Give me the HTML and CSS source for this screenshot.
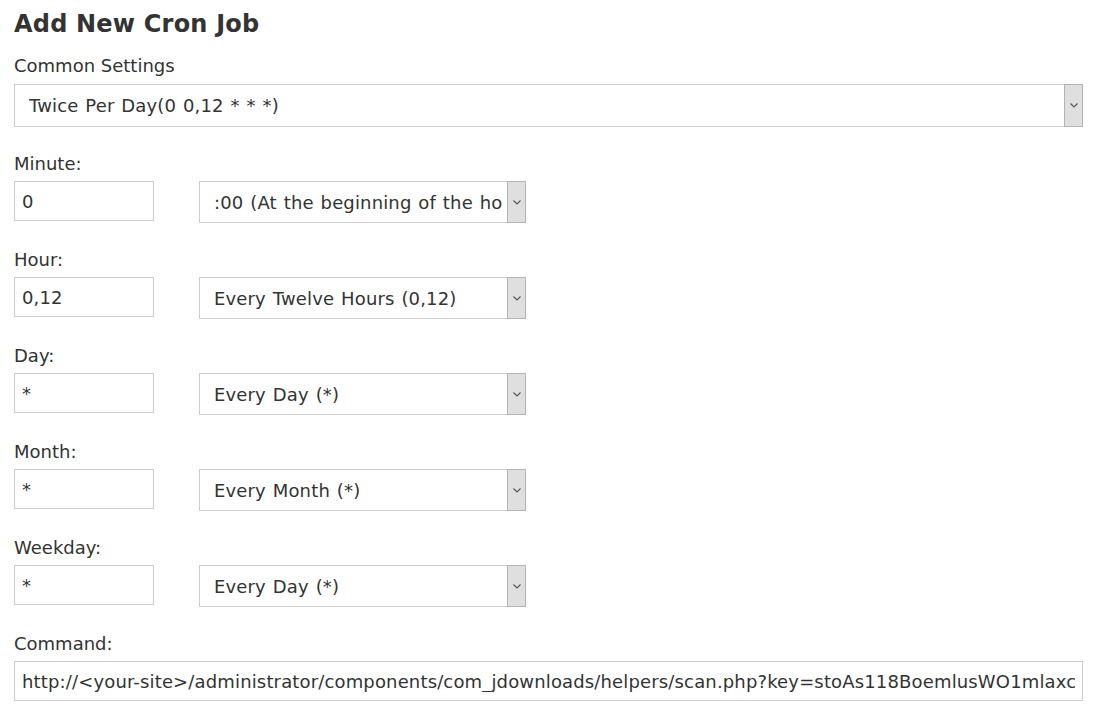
FILE: index.html
```html
<!DOCTYPE html>
<html lang="en">
  <head>
    <meta charset="UTF-8" />
    <meta name="viewport" content="width=device-width, initial-scale=1.0" />
    <title>Add New Cron Job</title>
    <link rel="stylesheet" href="styles.css">
  </head>
  <body>
    <div class="container">
      <h1>Add New Cron Job</h1>

      <div class="group first">
        <label for="common">Common Settings</label>
        <div class="select wide">
          <select id="common" name="common">
            <option>Twice Per Day(0 0,12 * * *)</option>
          </select>
          <span class="arrow"><svg width="8" height="5" viewBox="0 0 8 5"><path d="M0.5 0.5 L4 4 L7.5 0.5" fill="none" stroke="#555" stroke-width="1.1"/></svg></span>
        </div>
      </div>

      <div class="group">
        <label for="minute">Minute:</label>
        <div class="row">
          <input type="text" id="minute" name="minute" value="0" />
          <div class="select">
            <select name="minuteSelect">
              <option>:00 (At the beginning of the hour) (0)</option>
            </select>
            <span class="arrow"><svg width="8" height="5" viewBox="0 0 8 5"><path d="M0.5 0.5 L4 4 L7.5 0.5" fill="none" stroke="#555" stroke-width="1.1"/></svg></span>
          </div>
        </div>
      </div>

      <div class="group">
        <label for="hour">Hour:</label>
        <div class="row">
          <input type="text" id="hour" name="hour" value="0,12" />
          <div class="select">
            <select name="hourSelect">
              <option>Every Twelve Hours (0,12)</option>
            </select>
            <span class="arrow"><svg width="8" height="5" viewBox="0 0 8 5"><path d="M0.5 0.5 L4 4 L7.5 0.5" fill="none" stroke="#555" stroke-width="1.1"/></svg></span>
          </div>
        </div>
      </div>

      <div class="group">
        <label for="day">Day:</label>
        <div class="row">
          <input type="text" id="day" name="day" value="*" />
          <div class="select">
            <select name="daySelect">
              <option>Every Day (*)</option>
            </select>
            <span class="arrow"><svg width="8" height="5" viewBox="0 0 8 5"><path d="M0.5 0.5 L4 4 L7.5 0.5" fill="none" stroke="#555" stroke-width="1.1"/></svg></span>
          </div>
        </div>
      </div>

      <div class="group">
        <label for="month">Month:</label>
        <div class="row">
          <input type="text" id="month" name="month" value="*" />
          <div class="select">
            <select name="monthSelect">
              <option>Every Month (*)</option>
            </select>
            <span class="arrow"><svg width="8" height="5" viewBox="0 0 8 5"><path d="M0.5 0.5 L4 4 L7.5 0.5" fill="none" stroke="#555" stroke-width="1.1"/></svg></span>
          </div>
        </div>
      </div>

      <div class="group">
        <label for="weekday">Weekday:</label>
        <div class="row">
          <input type="text" id="weekday" name="weekday" value="*" />
          <div class="select">
            <select name="weekdaySelect">
              <option>Every Day (*)</option>
            </select>
            <span class="arrow"><svg width="8" height="5" viewBox="0 0 8 5"><path d="M0.5 0.5 L4 4 L7.5 0.5" fill="none" stroke="#555" stroke-width="1.1"/></svg></span>
          </div>
        </div>
      </div>

      <div class="group">
        <label for="command">Command:</label>
        <input
          type="text"
          id="command"
          name="command"
          class="command"
          value="http://&lt;your-site&gt;/administrator/components/com_jdownloads/helpers/scan.php?key=stoAs118BoemlusWO1mlaxcv9QeT"
        />
      </div>
    </div>
  </body>
</html>
```

FILE: styles.css
```css
body {
  font-family: "DejaVu Sans", Verdana, sans-serif;
  color: #333;
  background-color: #fff;
  margin: 0;
}

.container {
  width: 1069px;
  padding-left: 14px;
}

h1 {
  font-size: 24px;
  line-height: 29px;
  font-weight: bold;
  letter-spacing: 0.2px;
  margin: 10px 0 16px 0;
}

.group {
  margin-bottom: 26px;
}

label {
  display: block;
  font-size: 18px;
  line-height: 22px;
  margin-bottom: 6px;
}

.first label {
  margin-bottom: 7px;
}

.row {
  display: flex;
  align-items: flex-start;
  gap: 45px;
}

input {
  width: 140px;
  height: 40px;
  padding: 0 7px;
  border: 1px solid #ccc;
  box-sizing: border-box;
  font-family: inherit;
  font-size: 18px;
  letter-spacing: 0.15px;
  color: #333;
  margin: 0;
}

input.command {
  width: 100%;
}

.select {
  display: flex;
  width: 327px;
  height: 42px;
  border: 1px solid #ccc;
  box-sizing: border-box;
  background: #fff;
}

.select.wide {
  width: 100%;
  height: 43px;
}

.select select {
  flex: 1;
  min-width: 0;
  appearance: none;
  -webkit-appearance: none;
  border: none;
  outline: none;
  background: #fff;
  font-family: inherit;
  font-size: 18px;
  letter-spacing: 0.15px;
  word-spacing: 1px;
  color: #333;
  padding: 0 4px 0 14px;
  margin: 0;
}

.arrow {
  display: flex;
  align-items: center;
  justify-content: center;
  width: 17px;
  margin: -1px -1px -1px 0;
  background-color: #dfdfdf;
  border: 1px solid #b4b4b4;
}
```
